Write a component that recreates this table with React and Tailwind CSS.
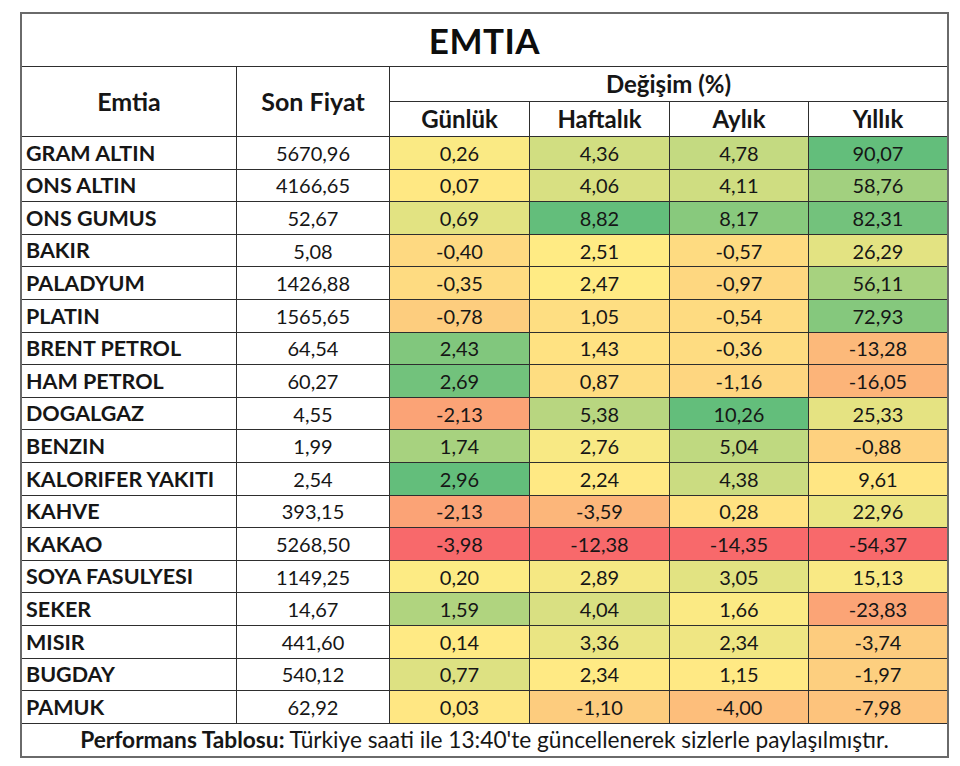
import React from "react";

const rows = [
  ["GRAM ALTIN", "5670,96", [0.26, 4.36, 4.78, 90.07]],
  ["ONS ALTIN", "4166,65", [0.07, 4.06, 4.11, 58.76]],
  ["ONS GUMUS", "52,67", [0.69, 8.82, 8.17, 82.31]],
  ["BAKIR", "5,08", [-0.4, 2.51, -0.57, 26.29]],
  ["PALADYUM", "1426,88", [-0.35, 2.47, -0.97, 56.11]],
  ["PLATIN", "1565,65", [-0.78, 1.05, -0.54, 72.93]],
  ["BRENT PETROL", "64,54", [2.43, 1.43, -0.36, -13.28]],
  ["HAM PETROL", "60,27", [2.69, 0.87, -1.16, -16.05]],
  ["DOGALGAZ", "4,55", [-2.13, 5.38, 10.26, 25.33]],
  ["BENZIN", "1,99", [1.74, 2.76, 5.04, -0.88]],
  ["KALORIFER YAKITI", "2,54", [2.96, 2.24, 4.38, 9.61]],
  ["KAHVE", "393,15", [-2.13, -3.59, 0.28, 22.96]],
  ["KAKAO", "5268,50", [-3.98, -12.38, -14.35, -54.37]],
  ["SOYA FASULYESI", "1149,25", [0.2, 2.89, 3.05, 15.13]],
  ["SEKER", "14,67", [1.59, 4.04, 1.66, -23.83]],
  ["MISIR", "441,60", [0.14, 3.36, 2.34, -3.74]],
  ["BUGDAY", "540,12", [0.77, 2.34, 1.15, -1.97]],
  ["PAMUK", "62,92", [0.03, -1.1, -4.0, -7.98]],
];

const RED = [248, 105, 107];
const YEL = [255, 235, 132];
const GRN = [99, 190, 123];

function mix(a, b, t) {
  return a.map((v, i) => Math.round(v + (b[i] - v) * t));
}

const stats = [0, 1, 2, 3].map((c) => {
  const vals = rows.map((r) => r[2][c]).sort((a, b) => a - b);
  const n = vals.length;
  const med = n % 2 ? vals[(n - 1) / 2] : (vals[n / 2 - 1] + vals[n / 2]) / 2;
  return { min: vals[0], max: vals[n - 1], med };
});

function colorFor(v, c) {
  const { min, max, med } = stats[c];
  let rgb;
  if (v <= med) {
    const t = med === min ? 0 : (med - v) / (med - min);
    rgb = mix(YEL, RED, t);
  } else {
    const t = max === med ? 0 : (v - med) / (max - med);
    rgb = mix(YEL, GRN, t);
  }
  return `rgb(${rgb[0]},${rgb[1]},${rgb[2]})`;
}

function fmt(v) {
  return v.toFixed(2).replace(".", ",");
}

export default function App() {
  return (
    <div className="min-h-[766px] bg-white pt-[12px] pl-[20px]" style={{ fontFamily: "Lato, 'Open Sans', sans-serif" }}>
      <div className="w-[929px] border-2 border-[#6a6a6a] text-[#161616]">
        <div className="grid grid-cols-[214px_152px_139px_139px_138px_138px] grid-rows-[52px_34px_34px_repeat(18,31.6px)_32px] gap-px bg-[#2e2e2e]">
          <div className="col-span-6 bg-white flex items-center justify-center text-[35px] font-bold tracking-[0.5px] text-[#0d0d0d]">
            EMTIA
          </div>
          <div className="row-span-2 bg-white flex items-center justify-center text-[25px] font-bold">Emtia</div>
          <div className="row-span-2 bg-white flex items-center justify-center text-[25px] font-bold">Son Fiyat</div>
          <div className="col-span-4 bg-white flex items-center justify-center text-[24px] font-bold">Değişim (%)</div>
          <div className="bg-white flex items-center justify-center text-[24px] font-bold">Günlük</div>
          <div className="bg-white flex items-center justify-center text-[24px] font-bold">Haftalık</div>
          <div className="bg-white flex items-center justify-center text-[24px] font-bold">Aylık</div>
          <div className="bg-white flex items-center justify-center text-[24px] font-bold">Yıllık</div>
          {rows.map(([name, price, vals]) => (
            <React.Fragment key={name}>
              <div className="bg-white flex items-center pl-[4px] text-[21.5px] font-bold whitespace-nowrap">{name}</div>
              <div className="bg-white flex items-center justify-center text-[20px]">{price}</div>
              {vals.map((v, c) => (
                <div
                  key={c}
                  className="flex items-center justify-center text-[20px]"
                  style={{ backgroundColor: colorFor(v, c) }}
                >
                  {fmt(v)}
                </div>
              ))}
            </React.Fragment>
          ))}
          <div className="col-span-6 bg-white flex items-center justify-center text-[22.7px] whitespace-nowrap">
            <span className="font-bold">Performans Tablosu:</span>
            <span>&nbsp;Türkiye saati ile 13:40'te güncellenerek sizlerle paylaşılmıştır.</span>
          </div>
        </div>
      </div>
    </div>
  );
}
